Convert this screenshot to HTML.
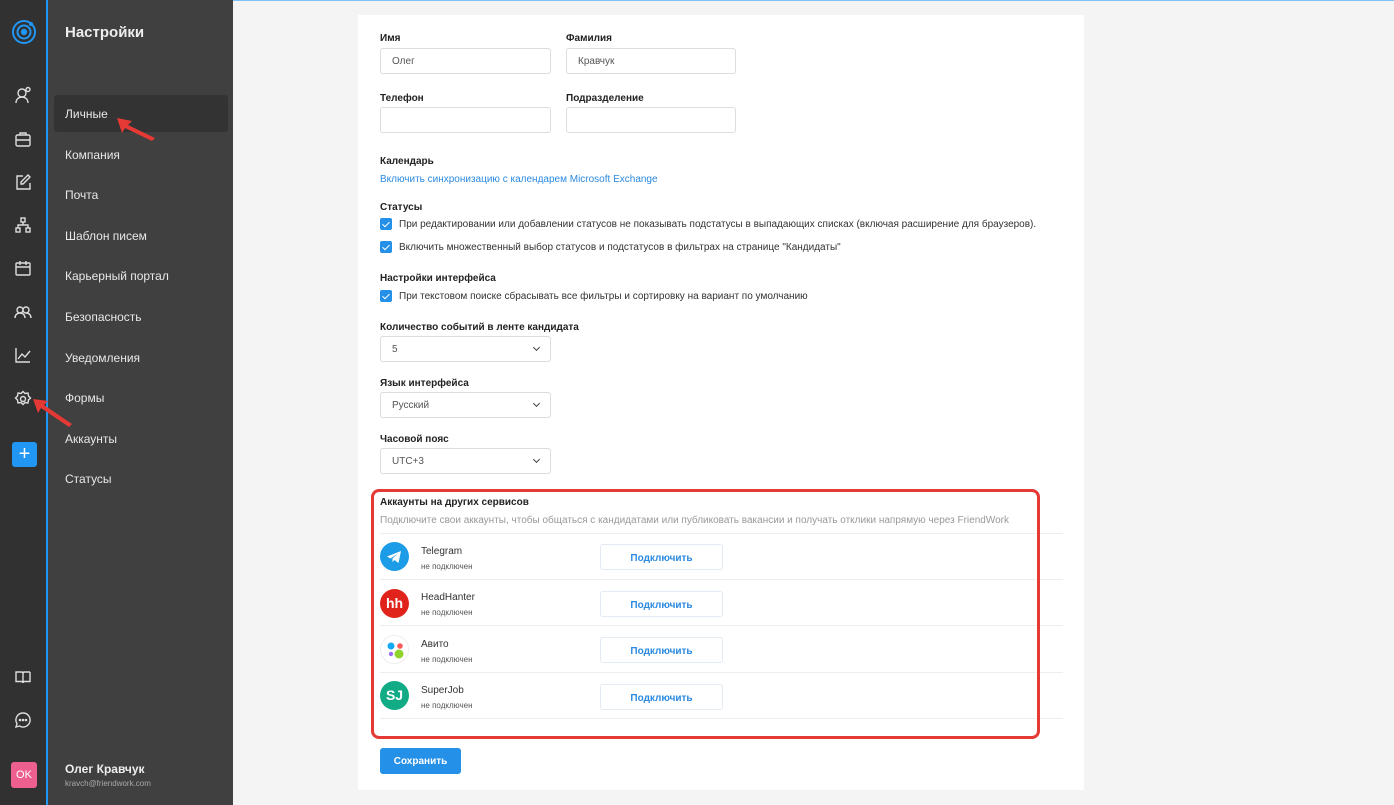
<!DOCTYPE html><html><head><meta charset="utf-8"><style>
*{box-sizing:border-box;margin:0;padding:0}
body{width:1394px;height:805px;overflow:hidden;background:#f4f4f5;font-family:"Liberation Sans",sans-serif;position:relative;color:#222}
.a{position:absolute}
#rail{left:0;top:0;width:46px;height:805px;background:#313131}
#bl{left:46px;top:0;width:2px;height:805px;background:#2196f3}
#side{left:48px;top:0;width:185px;height:805px;background:#404040}
#top{left:233px;top:0;width:1161px;height:1px;background:#7fc1f5}
.nav{position:absolute;left:65px;color:#e8e8e8;font-size:12px}
.ic{position:absolute;left:14px;width:18px;height:18px}
#card{left:358px;top:15px;width:726px;height:775px;background:#fff}
.lb{position:absolute;font-size:10px;font-weight:bold;color:#222}
.in{position:absolute;height:26px;border:1px solid #ddd;border-radius:3px;background:#fff;font-size:10px;color:#555;padding:7px 0 0 11px}
.sel::after{content:"";position:absolute;right:11px;top:8px;width:4px;height:4px;border-right:1.5px solid #444;border-bottom:1.5px solid #444;transform:rotate(45deg)}
.cb{position:absolute;left:380px;width:12px;height:12px;background:#2590e8;border-radius:2px}
.cb::after{content:"";position:absolute;left:4px;top:1.5px;width:3px;height:6px;border-right:1.6px solid #fff;border-bottom:1.6px solid #fff;transform:rotate(45deg)}
.tx{position:absolute;font-size:10px;color:#333}
.hr{position:absolute;left:380px;width:683px;height:1px;background:#eee}
.lg{position:absolute;left:380px;width:29px;height:29px;border-radius:50%}
.nm{position:absolute;left:421px;font-size:10px;color:#333}
.st{position:absolute;left:421px;font-size:8px;color:#555}
.bt{position:absolute;left:600px;width:123px;height:26px;border:1px solid #e3eaf2;border-radius:3px;font-size:10px;font-weight:bold;color:#2b8ae0;text-align:center;line-height:27px}
</style></head><body>
<div class="a" id="rail"></div><div class="a" id="bl"></div><div class="a" id="side"></div><div class="a" id="top"></div>
<svg class="a" style="left:11px;top:19px" width="26" height="26" viewBox="0 0 26 26" fill="none" stroke="#2196f3" stroke-width="2"><circle cx="13" cy="13" r="11"/><circle cx="13" cy="13" r="6.5"/><circle cx="13" cy="13" r="2.2" fill="#2196f3"/><circle cx="20" cy="5" r="2" fill="#2196f3" stroke="none"/></svg>
<svg class="ic" style="top:86px" viewBox="0 0 18 18" fill="none" stroke="#ddd" stroke-width="1.4"><circle cx="8" cy="7" r="4"/><path d="M2 17c0-4 3-6 6-6s6 2 6 6"/><circle cx="14" cy="3.5" r="2"/></svg>
<svg class="ic" style="top:130px" viewBox="0 0 18 18" fill="none" stroke="#ddd" stroke-width="1.4"><rect x="2" y="5" width="14" height="11" rx="1.5"/><path d="M6 5V3h6v2M2 10h14"/></svg>
<svg class="ic" style="top:173px" viewBox="0 0 18 18" fill="none" stroke="#ddd" stroke-width="1.4"><path d="M9 3H3v13h13v-6"/><path d="M14 2l2 2-7 7H7V9z"/></svg>
<svg class="ic" style="top:216px" viewBox="0 0 18 18" fill="none" stroke="#ddd" stroke-width="1.4"><rect x="7" y="2" width="4" height="4"/><rect x="2" y="12" width="4" height="4"/><rect x="12" y="12" width="4" height="4"/><path d="M9 6v3M4 12V9h10v3"/></svg>
<svg class="ic" style="top:259px" viewBox="0 0 18 18" fill="none" stroke="#ddd" stroke-width="1.4"><rect x="2" y="4" width="14" height="12" rx="1"/><path d="M2 8h14M6 2v4M12 2v4"/></svg>
<svg class="ic" style="top:303px" viewBox="0 0 18 18" fill="none" stroke="#ddd" stroke-width="1.4"><circle cx="6" cy="7" r="3"/><circle cx="12" cy="7" r="3"/><path d="M1 15c0-3 2-5 5-5s5 2 5 5M12 10c3 0 5 2 5 5"/></svg>
<svg class="ic" style="top:346px" viewBox="0 0 18 18" fill="none" stroke="#ddd" stroke-width="1.4"><path d="M2 2v14h14"/><path d="M4 13l4-5 3 3 5-6"/></svg>
<svg class="ic" style="top:390px" viewBox="0 0 18 18" fill="none" stroke="#ddd" stroke-width="1.4"><circle cx="9" cy="9" r="2.5"/><path d="M9 1.5l2 2 3-.5.5 3 2 2-2 2-.5 3-3-.5-2 2-2-2-3 .5-.5-3-2-2 2-2 .5-3 3 .5z"/></svg>
<div class="a" style="left:12px;top:442px;width:25px;height:25px;background:#2196f3;border-radius:3px;color:#fff;font-size:20px;text-align:center;line-height:24px">+</div>
<svg class="ic" style="top:668px" viewBox="0 0 18 18" fill="none" stroke="#ddd" stroke-width="1.4"><path d="M2 4h5.5c1 0 1.5.7 1.5 1.5V15c0-.8-.5-1.5-1.5-1.5H2zM16 4h-5.5C9.5 4 9 4.7 9 5.5"/><path d="M16 4v9.5h-5.5c-1 0-1.5.7-1.5 1.5"/></svg>
<svg class="ic" style="top:711px" viewBox="0 0 18 18" fill="none" stroke="#ddd" stroke-width="1.4"><path d="M9 2a7 7 0 1 1-3.5 13L2 16l1-3.3A7 7 0 0 1 9 2z"/><circle cx="6" cy="9" r=".6" fill="#ddd"/><circle cx="9" cy="9" r=".6" fill="#ddd"/><circle cx="12" cy="9" r=".6" fill="#ddd"/></svg>
<div class="a" style="left:11px;top:762px;width:26px;height:26px;background:#ec5f8f;border-radius:3px;color:#fff;font-size:11px;text-align:center;line-height:26px">OK</div>
<div class="a" style="left:65px;top:24px;color:#eee;font-size:15px;font-weight:bold">Настройки</div>
<div class="a" style="left:54px;top:95px;width:174px;height:37px;background:#333;border-radius:3px"></div>
<div class="nav" style="top:107px">Личные</div>
<div class="nav" style="top:148px">Компания</div>
<div class="nav" style="top:188px">Почта</div>
<div class="nav" style="top:229px">Шаблон писем</div>
<div class="nav" style="top:269px">Карьерный портал</div>
<div class="nav" style="top:310px">Безопасность</div>
<div class="nav" style="top:351px">Уведомления</div>
<div class="nav" style="top:391px">Формы</div>
<div class="nav" style="top:432px">Аккаунты</div>
<div class="nav" style="top:472px">Статусы</div>
<div class="a" style="left:65px;top:762px;color:#eee;font-size:12px;font-weight:bold">Олег Кравчук</div>
<div class="a" style="left:65px;top:779px;color:#aaa;font-size:8px">kravch@friendwork.com</div>
<svg class="a" style="left:110px;top:112px" width="50" height="30"><path d="M7 6L22 9 18 13 45 26 42 29 15 16 12 21z" fill="#e53935"/></svg>
<svg class="a" style="left:30px;top:395px" width="45" height="35"><path d="M3 4L18 6 14 10 42 29 39 32 11 13 8 18z" fill="#e53935"/></svg>
<div class="a" id="card"></div>
<div class="lb" style="left:380px;top:33px">Имя</div><div class="lb" style="left:566px;top:33px">Фамилия</div>
<div class="in" style="left:380px;top:48px;width:171px">Олег</div><div class="in" style="left:566px;top:48px;width:170px">Кравчук</div>
<div class="lb" style="left:380px;top:93px">Телефон</div><div class="lb" style="left:566px;top:93px">Подразделение</div>
<div class="in" style="left:380px;top:107px;width:171px"></div><div class="in" style="left:566px;top:107px;width:170px"></div>
<div class="lb" style="left:380px;top:156px">Календарь</div>
<div class="tx" style="left:380px;top:174px;color:#2b8ae0">Включить синхронизацию с календарем Microsoft Exchange</div>
<div class="lb" style="left:380px;top:202px">Статусы</div>
<div class="cb" style="top:218px"></div><div class="tx" style="left:399px;top:219px">При редактировании или добавлении статусов не показывать подстатусы в выпадающих списках (включая расширение для браузеров).</div>
<div class="cb" style="top:241px"></div><div class="tx" style="left:399px;top:242px">Включить множественный выбор статусов и подстатусов в фильтрах на странице "Кандидаты"</div>
<div class="lb" style="left:380px;top:273px">Настройки интерфейса</div>
<div class="cb" style="top:290px"></div><div class="tx" style="left:399px;top:291px">При текстовом поиске сбрасывать все фильтры и сортировку на вариант по умолчанию</div>
<div class="lb" style="left:380px;top:322px">Количество событий в ленте кандидата</div>
<div class="in sel" style="left:380px;top:336px;width:171px">5</div>
<div class="lb" style="left:380px;top:378px">Язык интерфейса</div>
<div class="in sel" style="left:380px;top:392px;width:171px">Русский</div>
<div class="lb" style="left:380px;top:434px">Часовой пояс</div>
<div class="in sel" style="left:380px;top:448px;width:171px">UTC+3</div>
<div class="lb" style="left:380px;top:497px">Аккаунты на других сервисов</div>
<div class="tx" style="left:380px;top:515px;color:#999">Подключите свои аккаунты, чтобы общаться с кандидатами или публиковать вакансии и получать отклики напрямую через FriendWork</div>
<div class="hr" style="top:533px"></div><div class="hr" style="top:579px"></div><div class="hr" style="top:625px"></div><div class="hr" style="top:672px"></div><div class="hr" style="top:718px"></div>
<div class="lg" style="top:542px;background:#1c9be6"><svg width="29" height="29"><path d="M7 14.5L21 9l-2.5 12-4-3-2 2v-3.5L18 11.5l-7.5 5z" fill="#fff"/></svg></div>
<div class="lg" style="top:589px;background:#e0241b;color:#fff;font-weight:bold;font-size:14px;text-align:center;line-height:29px">hh</div>
<div class="lg" style="top:635px;background:#fff;border:1px solid #eee"><svg width="29" height="29"><circle cx="10" cy="10" r="3.5" fill="#13a9f5"/><circle cx="19" cy="10" r="2.8" fill="#ff5b5b"/><circle cx="10" cy="18" r="2.2" fill="#9b6cf2"/><circle cx="18" cy="18" r="4.5" fill="#8fd22b"/></svg></div>
<div class="lg" style="top:681px;background:#11ab85;color:#fff;font-weight:bold;font-size:14px;text-align:center;line-height:29px">SJ</div>
<div class="nm" style="top:546px">Telegram</div><div class="st" style="top:562px">не подключен</div>
<div class="nm" style="top:592px">HeadHanter</div><div class="st" style="top:608px">не подключен</div>
<div class="nm" style="top:639px">Авито</div><div class="st" style="top:655px">не подключен</div>
<div class="nm" style="top:685px">SuperJob</div><div class="st" style="top:701px">не подключен</div>
<div class="bt" style="top:544px">Подключить</div><div class="bt" style="top:591px">Подключить</div><div class="bt" style="top:637px">Подключить</div><div class="bt" style="top:684px">Подключить</div>
<div class="a" style="left:371px;top:489px;width:669px;height:250px;border:3px solid #e53935;border-radius:8px"></div>
<div class="a" style="left:380px;top:748px;width:81px;height:26px;background:#2590e8;border-radius:3px;color:#fff;font-size:10px;font-weight:bold;text-align:center;line-height:27px">Сохранить</div>
</body></html>
